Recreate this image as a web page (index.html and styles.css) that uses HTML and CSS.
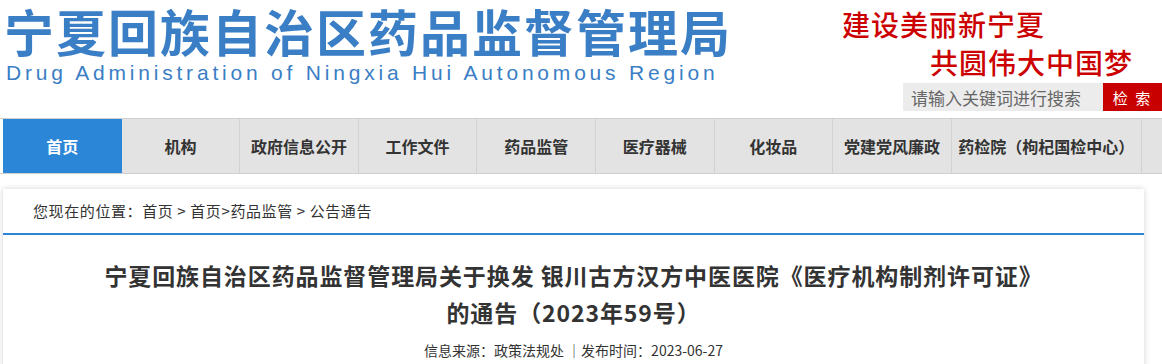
FILE: index.html
```html
<!DOCTYPE html>
<html lang="zh-CN">
<head>
    <meta charset="utf-8" />
    <title>宁夏回族自治区药品监督管理局</title>
    <link rel="stylesheet" href="styles.css">
</head>
<body>
    <div class="header">
        <div class="logo">
            <h1>宁夏回族自治区药品监督管理局</h1>
            <p>Drug Administration of Ningxia Hui Autonomous Region</p>
        </div>
        <div class="header-right">
            <div class="slogan">
                <span class="line1">建设美丽新宁夏</span>
                <span class="line2">共圆伟大中国梦</span>
            </div>
            <form class="search">
                <input type="text" placeholder="请输入关键词进行搜索" />
                <button type="button">检 索</button>
            </form>
        </div>
    </div>

    <div class="nav">
        <ul>
            <li class="current"><a href="#">首页</a></li>
            <li><a href="#">机构</a></li>
            <li><a href="#">政府信息公开</a></li>
            <li><a href="#">工作文件</a></li>
            <li><a href="#">药品监管</a></li>
            <li><a href="#">医疗器械</a></li>
            <li><a href="#">化妆品</a></li>
            <li><a href="#">党建党风廉政</a></li>
            <li class="wide"><a href="#">药检院（枸杞国检中心）</a></li>
            <li><a href="#"></a></li>
        </ul>
    </div>

    <div class="main">
        <div class="crumbs">
            您现在的位置：<a href="#">首页</a> &gt; <a href="#">首页</a>&gt;<a href="#">药品监管</a> &gt; <a href="#">公告通告</a>
        </div>
        <div class="article">
            <h2>宁夏回族自治区药品监督管理局关于换发 银川古方汉方中医医院《医疗机构制剂许可证》的通告（2023年59号）</h2>
            <div class="info">信息来源：政策法规处 ｜发布时间：2023-06-27</div>
        </div>
    </div>
</body>
</html>
```

FILE: styles.css
```css
* {
    margin: 0;
    padding: 0;
}

body {
    font-family: "Noto Sans CJK SC", "Liberation Sans", sans-serif;
    font-size: 14px;
    color: #333;
    background: #fff;
    overflow: hidden;
}

a {
    color: #333;
    text-decoration: none;
}

.header {
    display: flex;
    justify-content: space-between;
    height: 118px;
}

.logo {
    flex-shrink: 0;
    padding-left: 4px;
}

.logo h1 {
    font-size: 50px;
    line-height: 60px;
    letter-spacing: 2px;
    font-weight: bold;
    color: #3a7ec5;
    white-space: nowrap;
}

.logo p {
    font-family: "Liberation Sans", Arial, sans-serif;
    font-size: 21px;
    line-height: 26px;
    letter-spacing: 3.8px;
    color: #3a7ec5;
    padding-left: 2px;
    white-space: nowrap;
}

.header-right {
    display: flex;
    flex-direction: column;
    align-items: flex-end;
}

.slogan {
    width: 320px;
    color: #cc0000;
    font-size: 28px;
    line-height: 38px;
    font-weight: 500;
    letter-spacing: 1px;
    margin-top: 5px;
}

.slogan span {
    display: block;
}

.slogan .line2 {
    padding-left: 88px;
}

.search {
    display: flex;
    margin-top: 2px;
}

.search input {
    width: 200px;
    height: 28px;
    border: 0;
    background: #ececec;
    padding: 0 8px;
    box-sizing: border-box;
    font-family: inherit;
    font-size: 17px;
    color: #666;
    outline: none;
}

.search input::placeholder {
    color: #666;
}

.search button {
    width: 59px;
    height: 28px;
    border: 0;
    background: #c80000;
    color: #fff;
    font-family: inherit;
    font-size: 15px;
    letter-spacing: 2px;
}

.nav {
    border-top: 1px solid #cfcfcf;
    border-bottom: 1px solid #cfcfcf;
    padding-left: 3px;
}

.nav ul {
    display: flex;
    list-style: none;
    background: #e3e3e3;
    height: 54px;
}

.nav li {
    flex: 0 0 118.6px;
    box-sizing: border-box;
    border-right: 1px solid #d2d2d2;
}

.nav li.wide {
    flex-basis: 190px;
}

.nav li:last-child {
    flex: 1;
    border-right: 0;
}

.nav li a {
    display: block;
    line-height: 54px;
    text-align: center;
    font-size: 16px;
    font-weight: bold;
    color: #333;
}

.nav li.current {
    background: #2b86d8;
    border-right: 0;
}

.nav li.current a {
    color: #fff;
}

.main {
    width: 1141px;
    margin: 15px 0 0 3px;
    background: #fff;
    box-shadow: 0 0 6px rgba(0, 0, 0, 0.18);
    min-height: 200px;
}

.crumbs {
    height: 44px;
    line-height: 44px;
    padding-left: 30px;
    border-bottom: 2px solid #2b86d8;
    font-size: 15px;
    letter-spacing: 0.6px;
}

.article {
    padding: 22px 98px 0;
    text-align: center;
}

.article h2 {
    font-size: 23px;
    line-height: 37px;
    letter-spacing: 0.9px;
    font-weight: bold;
    color: #333;
}

.info {
    margin-top: 9px;
    font-size: 14px;
    color: #333;
}
```
